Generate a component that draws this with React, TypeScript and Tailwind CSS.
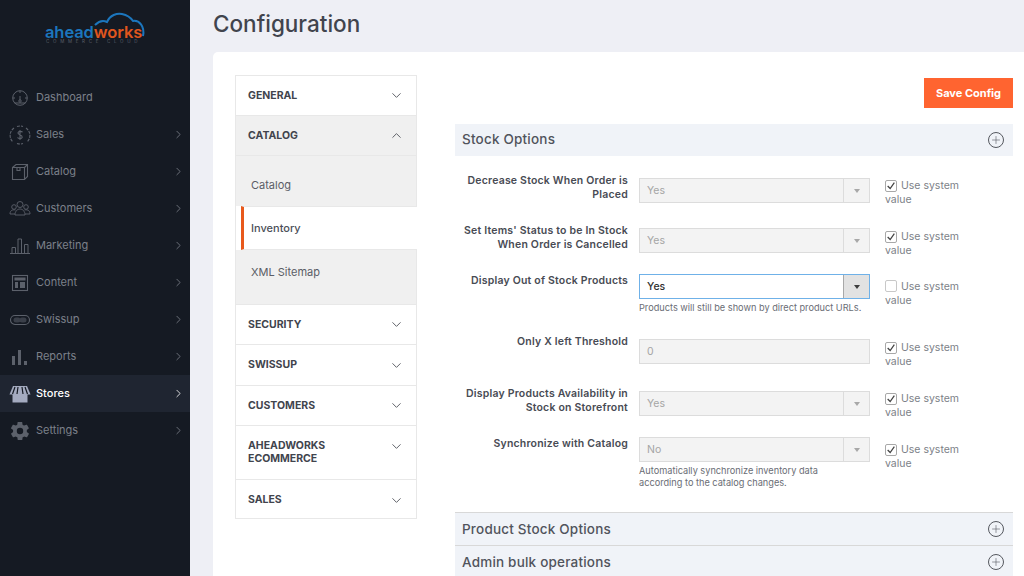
import { ChevronDown, ChevronRight, ChevronUp, Plus } from "lucide-react";
import type { ReactNode } from "react";

const iconClass = "w-[22px] h-[22px] text-[#5c616b]";

const icons: Record<string, ReactNode> = {
  Dashboard: (
    <svg viewBox="0 0 22 22" fill="none" stroke="currentColor" strokeWidth="1" className={iconClass}>
      <circle cx="11" cy="11" r="7.3" />
      <path d="M11 4v2M4 11h2M16 11h2M11 9v4" />
      <circle cx="11" cy="14" r="1.2" />
      <path d="M5.5 16h11" />
    </svg>
  ),
  Sales: (
    <svg viewBox="0 0 22 22" fill="none" stroke="currentColor" strokeWidth="1.1" className={iconClass}>
      <path d="M5 4a9 9 0 0 0-1 14M17 4a9 9 0 0 1 1 14M8 2.500a9 9 0 0 1 6 0M8 19.500a9 9 0 0 0 6 0" strokeDasharray="3 1" />
      <path d="M13.500 8.300c-.5-1-3.800-1.500-4.500.3-.8 2.400 4.800 2 4.200 4.700-.5 1.700-3.800 1.400-4.700.2M11 6v10" />
    </svg>
  ),
  Catalog: (
    <svg viewBox="0 0 22 22" fill="none" stroke="currentColor" strokeWidth="1.1" className={iconClass}>
      <path d="M3.500 6.500 7 3.500h11.500v12l-3 3h-12zM3.500 6.500h12v12M15.500 6.500l3-3" />
      <path d="M8 6.500v3h3v-3" />
    </svg>
  ),
  Customers: (
    <svg viewBox="0 0 22 22" fill="none" stroke="currentColor" strokeWidth="0.9" className={iconClass}>
      <circle cx="11" cy="6.500" r="3" />
      <circle cx="5" cy="9" r="2.300" />
      <circle cx="17" cy="9" r="2.300" />
      <path d="M6 17c0-8 10-8 10 0zM1 16c0-4 3-4.500 5.500-4M21 16c0-4-3-4.500-5.500-4M1 16h5M16 16h5" />
    </svg>
  ),
  Marketing: (
    <svg viewBox="0 0 22 22" fill="none" stroke="currentColor" strokeWidth="1" className={iconClass}>
      <path d="M1 18.500h20M3 18.500v-6h3.500v6M9 18.500V4h3.500v14.500M15.500 18.500v-9h3.500v9" />
    </svg>
  ),
  Content: (
    <svg viewBox="0 0 22 22" fill="none" stroke="currentColor" strokeWidth="1.1" className={iconClass}>
      <rect x="3.500" y="3.500" width="15" height="15" />
      <path d="M6 6h10v2H6z" fill="currentColor" />
      <path d="M6 10h3v6H6zM11 10h5v6h-5z" fill="currentColor" stroke="none" />
    </svg>
  ),
  Swissup: (
    <svg viewBox="0 0 22 22" fill="none" stroke="currentColor" strokeWidth="1.1" className={iconClass}>
      <rect x="1.500" y="6.500" width="19" height="9" rx="4.500" />
      <rect x="4.500" y="8.500" width="7" height="5" rx="2.500" fill="#3a3f49" stroke="none" />
      <rect x="10.500" y="8.500" width="7" height="5" rx="2.500" fill="#3a3f49" stroke="none" />
    </svg>
  ),
  Reports: (
    <svg viewBox="0 0 22 22" fill="currentColor" className={iconClass}>
      <rect x="3" y="10" width="3" height="9" />
      <rect x="9" y="4" width="3" height="15" />
      <rect x="15" y="15" width="3" height="4" />
    </svg>
  ),
  Stores: (
    <svg viewBox="0 0 22 22" className="w-[22px] h-[22px]">
      <path d="M3.500 11h15v8.500h-15z" fill="#a4abc0" />
      <path d="M4 3h14l3.500 8.500H.5z" fill="#a4abc0" />
      <path d="M6 4 3.500 11M9 4 8 11M13 4l1 7M16 4l2.500 7" stroke="#151a23" strokeWidth="1.2" />
    </svg>
  ),
  Settings: (
    <svg viewBox="0 0 24 24" fill="currentColor" className={iconClass}>
      <path d="M19.400 13c.1-.3.100-.7.100-1s0-.7-.1-1l2.100-1.600c.2-.2.200-.4.100-.6l-2-3.500c-.1-.2-.4-.3-.6-.2l-2.500 1c-.5-.4-1.100-.7-1.700-1l-.4-2.600c0-.3-.2-.4-.5-.4h-4c-.3 0-.5.100-.5.400l-.4 2.600c-.6.300-1.200.6-1.700 1l-2.500-1c-.2-.1-.5 0-.6.200l-2 3.500c-.1.200-.1.400.1.600L4.500 11c-.1.300-.1.700-.1 1s0 .7.100 1l-2.100 1.600c-.2.200-.2.400-.1.600l2 3.500c.1.200.4.300.6.200l2.500-1c.5.400 1.100.7 1.700 1l.4 2.600c0 .3.200.4.500.4h4c.3 0 .5-.1.500-.4l.4-2.600c.6-.3 1.200-.6 1.700-1l2.500 1c.2.100.5 0 .6-.2l2-3.500c.1-.2.100-.4-.1-.6zM12 15.500a3.500 3.500 0 1 1 0-7 3.500 3.500 0 0 1 0 7z" />
    </svg>
  ),
};

const menu = ["Dashboard", "Sales", "Catalog", "Customers", "Marketing", "Content", "Swissup", "Reports", "Stores", "Settings"];

function Logo() {
  return (
    <div className="relative h-[79px]">
      <svg viewBox="0 0 53 25" className="absolute left-[93px] top-[12px] w-[53px] h-[25px]" fill="none" stroke="#1c76bd" strokeWidth="2">
        <path d="M2 13C6 9 10 8 14 10 17 3 24 1 29 2 34 3 38 6 40 9 46 8 52 14 50 24" />
      </svg>
      <div className="absolute left-[45px] top-[25px] flex text-[16.5px] font-semibold leading-[14px] tracking-[-0.1px]">
        <div className="h-[14px] text-[#1c76bd]">ahead</div>
        <div className="h-[14px] text-[#e0561e]">works</div>
      </div>
      <div className="absolute left-[46px] top-[39px] text-[4.5px] leading-[5px] tracking-[3.7px] text-[#5a5f69] whitespace-nowrap">COMMERCE CLOUD</div>
    </div>
  );
}

function Sidebar() {
  return (
    <aside className="w-[190px] shrink-0 bg-[#151a23] h-full">
      <Logo />
      {menu.map((name) => {
        const active = name === "Stores";
        return (
          <div key={name} className={`h-[37px] flex items-center pl-[9px] pr-[5px] text-[11px] ${active ? "bg-[#1f2531] text-white font-medium" : "text-[#7c808a]"}`}>
            <span className="w-[27px] flex">{icons[name]}</span>
            <span className="flex-1">{name}</span>
            {name !== "Dashboard" && <ChevronRight className={`w-[13px] h-[13px] ${active ? "text-white" : "text-[#7c808a]"}`} strokeWidth={1.5} />}
          </div>
        );
      })}
    </aside>
  );
}

function NavHead({ title, open, second, tall, last }: { title: string; open?: boolean; second?: string; tall?: boolean; last?: boolean }) {
  const Icon = open ? ChevronUp : ChevronDown;
  const size = second
    ? "h-[54px] pt-[13px] leading-[13px] border-b border-[#e8e8e8]"
    : last
      ? "h-[38px] pt-[2px] items-center"
      : tall
        ? "h-[41px] items-center border-b border-[#e8e8e8]"
        : "h-[40px] items-center border-b border-[#e8e8e8]";
  return (
    <div className={`flex justify-between pl-[12px] pr-[12px] text-[10.5px] font-bold text-[#41444d] ${size} ${open ? "bg-[#f0f0f0]" : ""}`}>
      <span>
        {title}
        {second && <br />}
        {second}
      </span>
      <Icon className="w-[15px] h-[15px] text-[#55585f]" strokeWidth={1.5} />
    </div>
  );
}

function ConfigNav() {
  return (
    <nav className="w-[182px] shrink-0 self-start border border-[#e8e8e8] mt-[23px]">
      <NavHead title="GENERAL" />
      <NavHead title="CATALOG" open />
      <div className="bg-[#f0f0f0] h-[50px] pl-[15px] pt-[21px] text-[11px] leading-[16px] text-[#5a5d66]">Catalog</div>
      <div className="relative bg-white h-[44px] ml-[5px] -mr-px pl-[7px] flex items-center text-[11px] font-medium text-[#4c4f58] border-l-[3px] border-[#e8591c] border-y border-y-[#e8e8e8]">Inventory</div>
      <div className="bg-[#f0f0f0] h-[55px] pl-[15px] pt-[14px] text-[11px] leading-[16px] text-[#5a5d66] border-b border-[#e8e8e8]">XML Sitemap</div>
      <NavHead title="SECURITY" />
      <NavHead title="SWISSUP" tall />
      <NavHead title="CUSTOMERS" />
      <NavHead title="AHEADWORKS" second="ECOMMERCE" />
      <NavHead title="SALES" last />
    </nav>
  );
}

function Section({ title, top }: { title: string; top?: boolean }) {
  return (
    <div className={`flex items-center justify-between bg-[#f0f3f8] pl-[7px] pr-[9px] text-[13.5px] tracking-[0.2px] font-medium text-[#51545c] ${top ? "border-t border-[#d8d8d8] h-[33px]" : "h-[32px]"}`}>
      <span className={top ? "" : "pb-[1px]"}>{title}</span>
      <span className="w-[16px] h-[16px] rounded-full border border-[#55585f] flex items-center justify-center">
        <Plus className="w-[12px] h-[12px] text-[#55585f]" strokeWidth={1.2} />
      </span>
    </div>
  );
}

type Row = {
  label: string[];
  value: string;
  kind?: "text";
  active?: boolean;
  hint?: string[];
  // vertical offsets differ per row in the reference
  rowClass: string;
  fieldClass: string;
  labelClass: string;
  checkClass: string;
};

const rows: Row[] = [
  { label: ["Decrease Stock When Order is", "Placed"], value: "Yes", rowClass: "h-[50px]", fieldClass: "mt-[4px]", labelClass: "", checkClass: "pt-[5px]" },
  { label: ["Set Items' Status to be In Stock", "When Order is Cancelled"], value: "Yes", rowClass: "h-[50px]", fieldClass: "mt-[4px]", labelClass: "", checkClass: "pt-[6px]" },
  { label: ["Display Out of Stock Products"], value: "Yes", active: true, hint: ["Products will still be shown by direct product URLs."], rowClass: "h-[61px]", fieldClass: "", labelClass: "", checkClass: "pt-[6px]" },
  { label: ["Only X left Threshold"], value: "0", kind: "text", rowClass: "h-[52px]", fieldClass: "mt-[4px]", labelClass: "", checkClass: "pt-[6px]" },
  { label: ["Display Products Availability in", "Stock on Storefront"], value: "Yes", rowClass: "h-[50px]", fieldClass: "mt-[4px]", labelClass: "", checkClass: "pt-[5px]" },
  { label: ["Synchronize with Catalog"], value: "No", hint: ["Automatically synchronize inventory data", "according to the catalog changes."], rowClass: "h-[75px]", fieldClass: "", labelClass: "", checkClass: "pt-[6px]" },
];

function Field({ row }: { row: Row }) {
  const frame = row.active ? "bg-white border-[#6fb1e8] text-[#303030] font-medium" : "bg-[#f3f3f3] border-[#dcdcdc] text-[#a5a5a5]";
  return (
    <div className={`h-[25px] border flex items-center text-[10.5px] ${frame} ${row.fieldClass}`}>
      <span className="flex-1 pl-[7px]">{row.value}</span>
      {row.kind !== "text" && (
        <span className={`w-[26px] h-full flex items-center justify-center border-l ${row.active ? "bg-[#e2e2e2] border-[#a8a8a8]" : "border-[#dcdcdc]"}`}>
          <span className={`w-0 h-0 border-x-[3.5px] border-x-transparent border-t-[4px] ${row.active ? "border-t-[#3d3d3d]" : "border-t-[#a8a8a8]"}`} />
        </span>
      )}
    </div>
  );
}

function FormRow({ row }: { row: Row }) {
  return (
    <div className={`flex ${row.rowClass}`}>
      <div className={`w-[173px] shrink-0 text-right text-[10.5px] tracking-[0.2px] leading-[14px] font-semibold text-[#484b54] ${row.labelClass}`}>
        {row.label.map((l) => (
          <div key={l} className="whitespace-nowrap">{l}</div>
        ))}
      </div>
      <div className="w-[231px] shrink-0 ml-[11px]">
        <Field row={row} />
        {row.hint && (
          <div className="mt-[3px] text-[9.2px] leading-[12px] text-[#6a6d75]">
            {row.hint.map((h) => (
              <div key={h}>{h}</div>
            ))}
          </div>
        )}
      </div>
      <div className={`w-[90px] ml-[15px] text-[10.5px] leading-[14px] text-[#7c7f87] ${row.checkClass}`}>
        <span className={`inline-flex w-[12px] h-[12px] border rounded-[2px] bg-white align-[-2px] mr-[4px] items-center justify-center ${row.active ? "border-[#c8c8c8]" : "border-[#a8a8a8]"}`}>
          {!row.active && (
            <svg viewBox="0 0 12 12" className="w-[10px] h-[10px]" fill="none" stroke="#444" strokeWidth="1.5">
              <path d="M2 6l3 3 5-7" />
            </svg>
          )}
        </span>
        Use system value
      </div>
    </div>
  );
}

export default function App() {
  return (
    <div className="flex w-[1024px] h-[576px] overflow-hidden bg-[#eeeff5] font-['Inter',sans-serif]">
      <Sidebar />
      <main className="flex-1 pl-[23px] min-w-0">
        <h1 className="h-[52px] pt-[8px] text-[22.5px] leading-[32px] font-medium text-[#41444d]">Configuration</h1>
        <div className="bg-white h-[524px] rounded-tl-[5px] pl-[22px] pr-[11px] flex">
          <ConfigNav />
          <div className="ml-[38px] flex-1 min-w-0">
            <div className="flex justify-end pt-[26px] h-[72px]">
              <button className="w-[89px] h-[30px] bg-[#ff6430] text-white text-[11px] font-bold">Save Config</button>
            </div>
            <Section title="Stock Options" />
            <div className="pt-[18px]">
              {rows.map((row) => (
                <FormRow key={row.label[0]} row={row} />
              ))}
            </div>
            <Section title="Product Stock Options" top />
            <Section title="Admin bulk operations" top />
          </div>
        </div>
      </main>
    </div>
  );
}
